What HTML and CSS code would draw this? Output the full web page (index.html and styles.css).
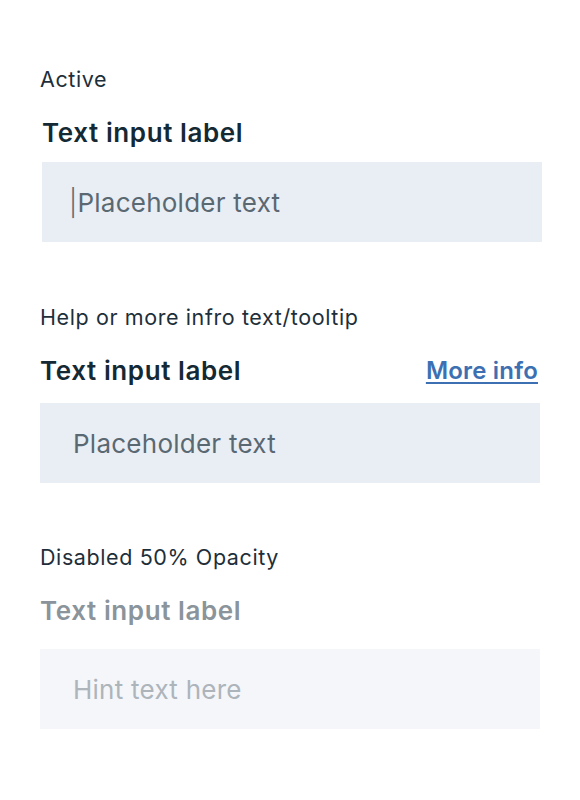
FILE: index.html
```html
<!DOCTYPE html>
<html lang="en">
<head>
<meta charset="utf-8">
<title>Text inputs</title>
<link rel="stylesheet" href="styles.css">
</head>
<body>
<main class="page">
  <section class="group group--active">
    <p class="caption">Active</p>
    <div class="field field--shift">
      <label class="label" for="f1">Text input label</label>
      <div class="input input--active"><span class="cursor">|</span><span class="placeholder">Placeholder text</span></div>
    </div>
  </section>

  <section class="group group--help">
    <p class="caption">Help or more infro text/tooltip</p>
    <div class="field">
      <div class="label-row">
        <label class="label" for="f2">Text input label</label>
        <a class="more" href="#">More info</a>
      </div>
      <div class="input"><span class="placeholder">Placeholder text</span></div>
    </div>
  </section>

  <section class="group group--disabled">
    <p class="caption">Disabled 50% Opacity</p>
    <div class="field field--disabled">
      <label class="label" for="f3">Text input label</label>
      <div class="input"><span class="placeholder">Hint text here</span></div>
    </div>
  </section>
</main>
</body>
</html>
```

FILE: styles.css
```css
* { box-sizing: border-box; }

html, body {
  margin: 0;
  padding: 0;
  background: #ffffff;
}

body {
  font-family: "Inter", "Noto Sans", sans-serif;
  color: #152935;
}

.page {
  padding: 67px 40px 0 40px;
  display: flex;
  flex-direction: column;
}

.group {
  display: flex;
  flex-direction: column;
}

.group--help { margin-top: 63px; }
.group--disabled { margin-top: 62px; }

.caption {
  margin: 0;
  font-size: 21.5px;
  letter-spacing: 0.6px;
  line-height: 24px;
  color: #1d2f3b;
}

.field {
  display: flex;
  flex-direction: column;
  margin-top: 27px;
}

.field--shift {
  margin-left: 2px;
  margin-right: -2px;
}

.label-row {
  display: flex;
  justify-content: space-between;
  align-items: center;
}

.label {
  font-size: 26px;
  letter-spacing: 0.6px;
  line-height: 30px;
  font-weight: 600;
  color: #152935;
}

.more {
  font-size: 24px;
  letter-spacing: 0.2px;
  line-height: 30px;
  font-weight: 600;
  color: #3d70b2;
  text-decoration: underline;
  text-decoration-thickness: 2px;
  text-underline-offset: 3px;
  margin-right: 2px;
}

.input {
  margin-top: 14px;
  height: 80px;
  background: #e9eef5;
  display: flex;
  align-items: center;
  padding-left: 33px;
  font-size: 26px;
  letter-spacing: 0.25px;
  color: #5a6872;
}

.group--help .input { margin-top: 17px; }

.input--active { padding-left: 31px; }

.cursor {
  color: #5a6872;
  font-weight: 300;
  margin-left: -4px;
  margin-right: 0;
}

.field--disabled .label { color: #8a949a; }
.field--disabled .input {
  margin-top: 23px;
  background: #f4f6fa;
  color: #adb4ba;
}
```
